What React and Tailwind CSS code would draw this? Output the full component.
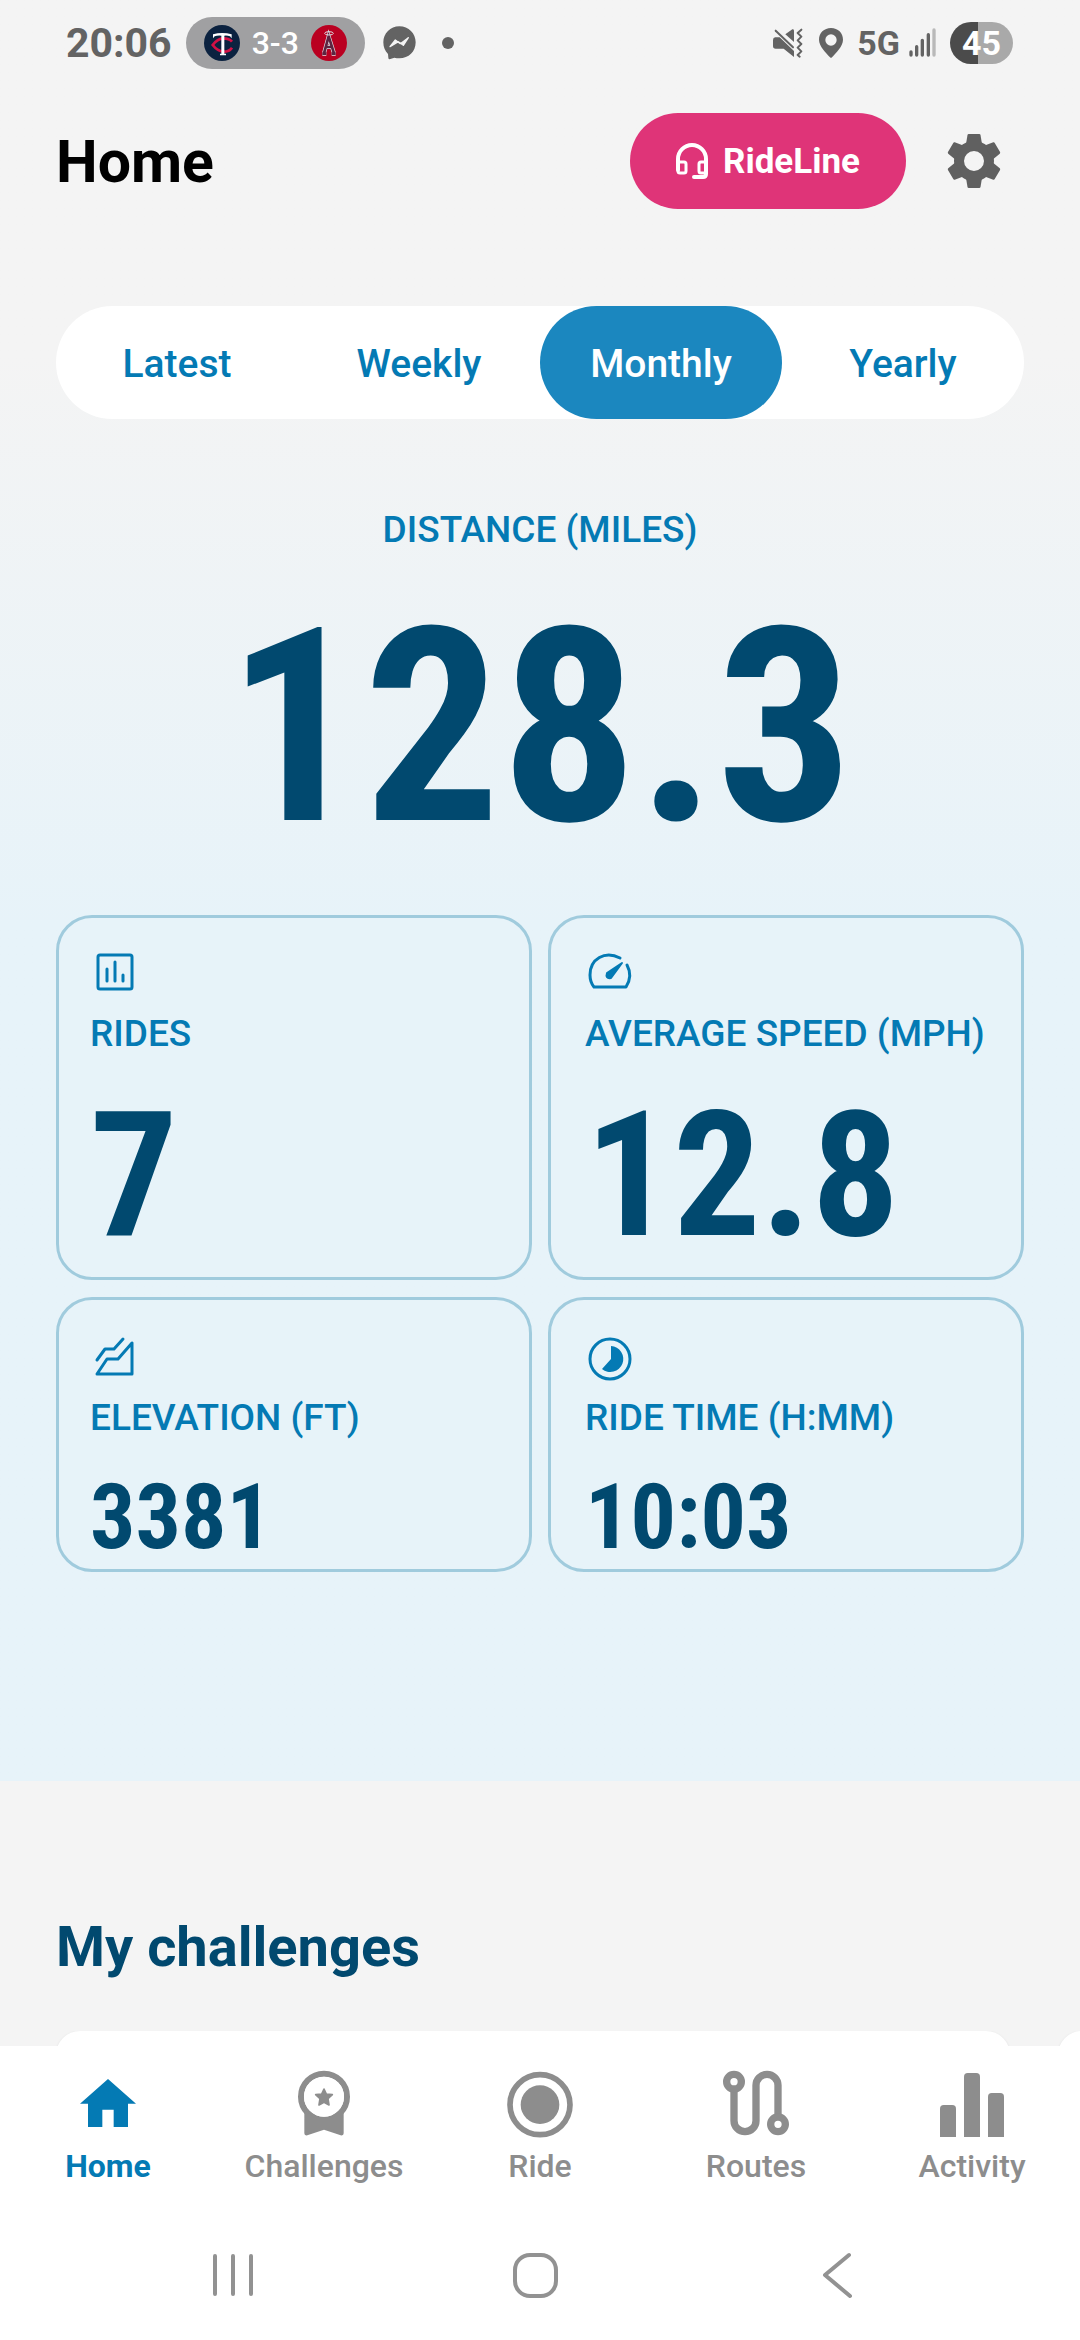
import React, { useState } from "react";

const condensed = "font-['Roboto_Condensed',Roboto,sans-serif]";

/* ---------- status bar ---------- */

function TwinsLogo() {
  return (
    <svg className="size-9" viewBox="0 0 108 108" aria-hidden="true">
      <circle cx="54" cy="54" r="54" fill="#0b2240" />
      <path d="M84 50 Q76 40 58 40 Q40 41 26 60 Q40 78 58 80 Q76 80 84 68" fill="none" stroke="#d31145" strokeWidth="8" />
      <path d="M27 40 V28 Q54 20 83 28 V40 L78 34 Q70 31 61 32 V86 H66 V91 H48 V86 H52 V32 Q40 31 32 34 Z" fill="#fff" />
    </svg>
  );
}

function AngelsLogo() {
  return (
    <svg className="size-9" viewBox="0 0 108 108" aria-hidden="true">
      <circle cx="54" cy="54" r="54" fill="#ba0021" />
      <path d="M34 86 H46 M62 86 H74 M39 85 L53 34 L69 85 M44 66 H64" fill="none" stroke="#e3e6ea" strokeWidth="12" />
      <path d="M34 86 H46 M62 86 H74 M39 85 L53 34 L69 85 M44 66 H64" fill="none" stroke="#5c2440" strokeWidth="8" />
      <ellipse cx="54" cy="25" rx="13" ry="5" fill="none" stroke="#d9dde2" strokeWidth="3" />
    </svg>
  );
}

function MessengerIcon() {
  return (
    <svg className="h-[34px] w-[33px]" viewBox="0 0 99 102" fill="#636363" aria-hidden="true">
      <path d="M49 1 C77 1 98 22 98 49 C98 77 77 97 49 97 Q41 97 34 95 L20 100 Q16 100 16 95 L15 84 C6 75 1 64 1 49 C1 22 22 1 49 1 Z" />
      <path d="M21 62 L37 42 L52 53 L76 35 L61 58 L46 47 Z" fill="#f4f4f4" stroke="#f4f4f4" strokeWidth="4" strokeLinejoin="round" />
    </svg>
  );
}

function VibrateIcon() {
  return (
    <svg className="size-[30px]" viewBox="0 0 90 90" fill="#636363" aria-hidden="true">
      <path d="M0 36 Q0 29 7 28 H20 L63 69 V87 L32 62 H8 Q0 62 0 54 Z" />
      <path d="M37 19 L58 4 Q63 2 63 8 V42 Z" />
      <path d="M8 8 L60 58" stroke="#636363" strokeWidth="6" strokeLinecap="round" />
      <path d="M85 5 L74 15 L85 26 L74 37 L85 48 L74 59 L85 70 L74 81 L80 86" fill="none" stroke="#636363" strokeWidth="6" strokeLinecap="round" strokeLinejoin="round" />
    </svg>
  );
}

function PinIcon() {
  return (
    <svg className="h-[30px] w-6" viewBox="0 0 72 90" aria-hidden="true">
      <path fillRule="evenodd" fill="#636363" d="M36 0 C57 0 72 15 72 35 C72 56 50 75 39 88 Q36 91 33 88 C22 75 0 56 0 35 C0 15 15 0 36 0 Z M36 19 A17 17 0 1 0 36 53 A17 17 0 1 0 36 19 Z" />
    </svg>
  );
}

function SignalIcon() {
  return (
    <svg className="h-[30px] w-[27px]" viewBox="0 0 81 90" strokeWidth="10" strokeLinecap="round" aria-hidden="true">
      <path d="M6 72 V81 M23 56 V81 M40 37 V81 M58 20 V81" stroke="#636363" />
      <path d="M75 6 V81" stroke="#b9b9b9" />
    </svg>
  );
}

function StatusBar() {
  return (
    <div className="flex h-[86px] items-center pl-[66px] pr-[67px] text-[#636363]">
      <span className="text-[41px] font-bold leading-none">20:06</span>
      <div className="ml-[14px] flex h-[52px] items-center gap-3 rounded-full bg-[#a0a0a2] px-[18px]">
        <TwinsLogo />
        <span className="text-[32px] font-medium leading-none text-white">3-3</span>
        <AngelsLogo />
      </div>
      <span className="ml-[18px]"><MessengerIcon /></span>
      <span className="ml-[26px] size-3 rounded-full bg-[#636363]" />
      <div className="ml-auto flex items-center">
        <VibrateIcon />
        <span className="ml-4"><PinIcon /></span>
        <span className="ml-[14px] text-[34px] font-bold leading-none">5G</span>
        <span className="ml-[9px]"><SignalIcon /></span>
        <span className="ml-[14px] flex h-[42px] w-[63px] items-center justify-center rounded-full bg-linear-to-r from-[#4b4b4b] from-45% to-[#a9a9a9] to-45% text-[34px] font-bold leading-none text-white">
          45
        </span>
      </div>
    </div>
  );
}

/* ---------- header ---------- */

function HeadsetIcon() {
  return (
    <svg className="h-[38px] w-[33px]" viewBox="0 0 33 38" fill="none" stroke="#fff" strokeWidth="4" strokeLinecap="round" strokeLinejoin="round" aria-hidden="true">
      <path d="M2 28 V17 A14 14 0 0 1 30 17 V32 Q30 35 27 35 H18" />
      <rect x="2" y="20" width="8" height="11" rx="2" strokeWidth="3" />
      <rect x="23" y="20" width="7" height="11" rx="2" strokeWidth="3" />
    </svg>
  );
}

function GearIcon() {
  return (
    <svg className="size-[54px]" viewBox="-27 -27 54 54" fill="#606060" aria-hidden="true">
      <circle r="15" fill="none" stroke="#606060" strokeWidth="10" />
      {[0, 60, 120, 180, 240, 300].map((a) => (
        <path key={a} transform={`rotate(${a})`} d="M-8 -17 L-6.5 -26 Q-6.3 -27 -5.3 -27 H5.3 Q6.3 -27 6.5 -26 L8 -17 Z" />
      ))}
    </svg>
  );
}

function Header() {
  return (
    <header className="flex items-center px-14 pt-[27px]">
      <h1 className="text-[59px] font-bold leading-none text-black">Home</h1>
      <button type="button" className="ml-auto flex h-24 items-center gap-[14px] rounded-full bg-[#df3478] px-[46px] text-[35px] font-bold leading-none text-white">
        <HeadsetIcon />
        RideLine
      </button>
      <button type="button" aria-label="Settings" className="ml-[18px] flex h-24 w-[100px] items-center justify-center">
        <GearIcon />
      </button>
    </header>
  );
}

/* ---------- stats ---------- */

function Tabs() {
  const [active, setActive] = useState("Monthly");
  return (
    <div role="tablist" className="mx-14 mt-[97px] grid h-[113px] grid-cols-4 rounded-full bg-white">
      {["Latest", "Weekly", "Monthly", "Yearly"].map((t) => (
        <button
          key={t}
          type="button"
          role="tab"
          aria-selected={t === active}
          onClick={() => setActive(t)}
          className={
            t === active
              ? "rounded-full bg-[#1b87bf] pt-1 text-[39px] font-medium text-white"
              : "rounded-full pt-1 text-[39px] font-medium text-[#047ab4]"
          }
        >
          {t}
        </button>
      ))}
    </div>
  );
}

const iconProps = {
  className: "size-[50px]",
  viewBox: "0 0 50 50",
  fill: "none",
  stroke: "#047ab4",
  strokeWidth: 3,
  strokeLinecap: "round",
  strokeLinejoin: "round",
  "aria-hidden": true,
};

function RidesIcon() {
  return (
    <svg {...iconProps}>
      <rect x="8" y="8" width="34" height="34" rx="2" />
      <path d="M17 22 V34 M25 15 V34 M33 28 V34" />
    </svg>
  );
}

function SpeedIcon() {
  return (
    <svg {...iconProps}>
      <path d="M35 11 C20 3 5 12 5 28 Q5 35 9 40 H41 Q48 29 42 18" />
      <path d="M37 16 L22 26 Q20 32 26 31 Z" fill="#047ab4" strokeWidth="2" />
    </svg>
  );
}

function ElevationIcon() {
  return (
    <svg {...iconProps}>
      <path d="M7 29 L15 18 H24 L33 8" />
      <path d="M7 43 L17 28 H28 L42 12 V43 Z" />
    </svg>
  );
}

function TimeIcon() {
  return (
    <svg {...iconProps}>
      <circle cx="25" cy="28" r="20" />
      <path d="M26 15 A13 13 0 1 1 17 38 L26 28 Z" fill="#047ab4" stroke="none" />
    </svg>
  );
}

function StatCard({ icon, label, value, large, right }) {
  return (
    <div
      className={`flex flex-col rounded-[36px] border-[3px] border-[#a0cbdd] bg-[#e7f3f9] ${large ? "pb-[14px] pt-7" : "pb-[6px] pt-[30px]"} ${right ? "pl-[34px]" : "pl-[31px]"}`}
    >
      <div className="flex h-[52px] items-center">{icon}</div>
      <div className="mt-[14px] whitespace-nowrap text-[37px] font-medium leading-[44px] text-[#047ab4]">{label}</div>
      <div className={`${condensed} font-bold leading-none text-[#01496f] ${large ? "mt-[33px] text-[174px]" : "mt-[33px] text-[90px]"}`}>
        {value}
      </div>
    </div>
  );
}

/* ---------- bottom navigation ---------- */

function HomeIcon() {
  return (
    <svg className="size-[68px]" viewBox="102 120 204 204" fill="currentColor" aria-hidden="true">
      <path d="M204 147 L288 221 H264 V291 H221 V239 H187 V291 H144 V221 H120 Z" />
    </svg>
  );
}

function ChallengesIcon() {
  return (
    <svg className="size-[68px]" viewBox="750 120 204 204" fill="currentColor" aria-hidden="true">
      <circle cx="852" cy="200" r="69" fill="none" stroke="currentColor" strokeWidth="18" />
      <path d="M793 238 Q820 266 852 266 Q884 266 911 238 V310 Q911 318 902 316 L852 299 L802 316 Q793 318 793 310 Z" />
      <circle cx="852" cy="200" r="60" fill="#fff" />
      <path d="M852 177 L859 192 L877 194 L864 206 L867 225 L852 217 L837 225 L840 206 L827 194 L845 192 Z" stroke="currentColor" strokeWidth="5" strokeLinejoin="round" />
    </svg>
  );
}

function RideIcon() {
  return (
    <svg className="size-[68px]" viewBox="1398 120 204 204" fill="currentColor" aria-hidden="true">
      <circle cx="1500" cy="224" r="90" fill="none" stroke="currentColor" strokeWidth="17" />
      <circle cx="1500" cy="224" r="58" />
    </svg>
  );
}

function RoutesIcon() {
  return (
    <svg className="size-[68px]" viewBox="486 120 204 204" fill="none" stroke="currentColor" strokeWidth="22" aria-hidden="true">
      <path d="M522 172 V272 A33 33 0 0 0 588 272 V166 A33 33 0 0 1 654 166 V268" />
      <circle cx="522" cy="155" r="22" fill="#fff" />
      <circle cx="654" cy="283" r="22" fill="#fff" />
    </svg>
  );
}

function ActivityIcon() {
  return (
    <svg className="size-[68px]" viewBox="1134 120 204 204" fill="currentColor" aria-hidden="true">
      <path d="M1140 321 V236 Q1140 225 1151 225 H1177 Q1188 225 1188 236 V321 Z" />
      <path d="M1212 321 V140 Q1212 129 1223 129 H1249 Q1260 129 1260 140 V321 Z" />
      <path d="M1284 321 V200 Q1284 189 1295 189 H1321 Q1332 189 1332 200 V321 Z" />
    </svg>
  );
}

const navItems = [
  { label: "Home", Icon: HomeIcon, active: true },
  { label: "Challenges", Icon: ChallengesIcon },
  { label: "Ride", Icon: RideIcon },
  { label: "Routes", Icon: RoutesIcon },
  { label: "Activity", Icon: ActivityIcon },
];

function BottomNav() {
  return (
    <nav className="grid grid-cols-5 pt-6">
      {navItems.map(({ label, Icon, active }) => (
        <a
          key={label}
          href={`#${label.toLowerCase()}`}
          aria-current={active ? "page" : undefined}
          className={`flex flex-col items-center gap-[10px] text-[32px] leading-9 ${active ? "font-bold text-[#047ab4]" : "font-medium text-[#8d8d8d]"}`}
        >
          <Icon />
          {label}
        </a>
      ))}
    </nav>
  );
}

function SystemNav() {
  const btn = "flex items-center justify-center";
  return (
    <div className="grid grid-cols-3 pb-[41px] pl-[82px] pr-[92px] pt-[67px]">
      <button type="button" aria-label="Recents" className={btn}>
        <svg className="size-12" viewBox="0 0 48 48" stroke="#929292" strokeWidth="4" strokeLinecap="round" aria-hidden="true">
          <path d="M6 5 V43 M24 5 V43 M42 5 V43" />
        </svg>
      </button>
      <button type="button" aria-label="System home" className={btn}>
        <svg className="size-12" viewBox="0 0 48 48" fill="none" stroke="#929292" strokeWidth="4" aria-hidden="true">
          <rect x="4" y="4" width="41" height="41" rx="15" />
        </svg>
      </button>
      <button type="button" aria-label="Back" className={btn}>
        <svg className="size-12" viewBox="0 0 48 48" fill="none" stroke="#929292" strokeWidth="4" strokeLinecap="round" strokeLinejoin="round" aria-hidden="true">
          <path d="M36 4 L12 24 L37 45" />
        </svg>
      </button>
    </div>
  );
}

export default function App() {
  return (
    <div className="flex h-screen flex-col bg-[#f4f4f4] font-[Roboto,sans-serif]">
      <main className="min-h-0 flex-1 overflow-hidden">
        <section className="bg-linear-to-b from-[#f4f4f4] from-20% to-[#e7f3f9] to-52% pb-[209px]">
          <StatusBar />
          <Header />
          <Tabs />
          <div className="mt-[89px] text-center">
            <div className="text-[37px] font-medium leading-[44px] text-[#047ab4]">DISTANCE (MILES)</div>
            <div className={`${condensed} mt-10 text-[271px] font-bold leading-none text-[#01496f]`}>128.3</div>
          </div>
          <div className="mx-14 mt-[52px] grid grid-cols-2 gap-x-4 gap-y-[17px]">
            <StatCard icon={<RidesIcon />} label="RIDES" value="7" large />
            <StatCard icon={<SpeedIcon />} label="AVERAGE SPEED (MPH)" value="12.8" large right />
            <StatCard icon={<ElevationIcon />} label="ELEVATION (FT)" value="3381" />
            <StatCard icon={<TimeIcon />} label="RIDE TIME (H:MM)" value="10:03" right />
          </div>
        </section>
        <section className="pl-14 pt-[134px]">
          <h2 className="text-[56px] font-bold leading-[64px] text-[#01496f]">My challenges</h2>
          <div className="mt-[52px] flex gap-12 overflow-hidden">
            <div className="h-[300px] w-[calc(100%-70px)] shrink-0 rounded-3xl bg-white shadow-sm" />
            <div className="h-[300px] w-[calc(100%-70px)] shrink-0 rounded-3xl bg-white shadow-sm" />
          </div>
        </section>
      </main>
      <footer className="bg-white">
        <BottomNav />
        <SystemNav />
      </footer>
    </div>
  );
}
